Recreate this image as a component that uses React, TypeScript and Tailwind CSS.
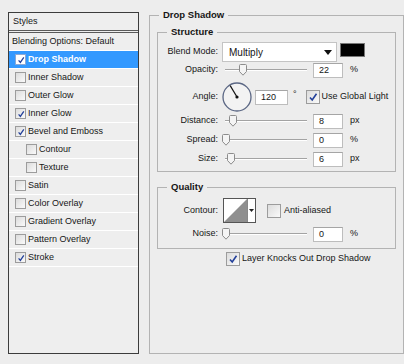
import type { ReactNode } from 'react';

type StyleItem = { name: string; checked?: boolean; selected?: boolean; indent?: boolean };

const styleItems: StyleItem[] = [
  { name: 'Drop Shadow', checked: true, selected: true },
  { name: 'Inner Shadow' },
  { name: 'Outer Glow' },
  { name: 'Inner Glow', checked: true },
  { name: 'Bevel and Emboss', checked: true },
  { name: 'Contour', indent: true },
  { name: 'Texture', indent: true },
  { name: 'Satin' },
  { name: 'Color Overlay' },
  { name: 'Gradient Overlay' },
  { name: 'Pattern Overlay' },
  { name: 'Stroke', checked: true },
];

function Check({ checked, big, white }: { checked?: boolean; big?: boolean; white?: boolean }) {
  return (
    <div
      className={
        (big ? 'w-[14px] h-[14px] ' : 'w-[11px] h-[11px] ') +
        (white
          ? 'bg-white border-[#8aa9d6] '
          : 'bg-gradient-to-br from-[#dcdcdc] to-[#fafafa] border-[#9c9c9c] ') +
        'shrink-0 border flex items-center justify-center'
      }
    >
      {checked && (
        <svg width={big ? 10 : 8} height={big ? 10 : 8} viewBox="0 0 10 10">
          <path d="M2 5.5 L4.2 8 L8.5 1.8" fill="none" stroke="#23409a" strokeWidth="1.6" />
        </svg>
      )}
    </div>
  );
}

function Slider({ thumb }: { thumb: number }) {
  return (
    <div className="relative w-[85px] h-[14px] shrink-0">
      <div className="absolute left-[3px] right-0 top-[6px] h-px bg-[#a3a3a3]" />
      <div className="absolute left-[3px] right-0 top-[7px] h-px bg-white" />
      <svg className="absolute top-[1px]" style={{ left: thumb }} width="8" height="12" viewBox="0 0 8 12">
        <path d="M1.5 0.5 H6.5 Q7.5 0.5 7.5 1.5 V7.5 L4 11.2 L0.5 7.5 V1.5 Q0.5 0.5 1.5 0.5 Z" fill="#f4f4f4" stroke="#8c8c8c" />
      </svg>
    </div>
  );
}

function NumBox({ value, wide }: { value: string; wide?: boolean }) {
  return (
    <div
      className={
        (wide ? 'w-[33px] ' : 'w-[30px] ') +
        'h-[15px] shrink-0 bg-white border border-[#bdbdbd] border-t-[#a5a5a5] pl-[5px] leading-[13px]'
      }
    >
      {value}
    </div>
  );
}

function Label({ children }: { children: ReactNode }) {
  return <div className="w-[60px] shrink-0 text-right">{children}</div>;
}

function SliderRow({ label, thumb, value, unit, className }: { label: string; thumb: number; value: string; unit: string; className: string }) {
  return (
    <div className={'flex items-center gap-[4px] h-[14px] ' + className}>
      <Label>{label}</Label>
      <Slider thumb={thumb} />
      <div className="ml-[2px]">
        <NumBox value={value} />
      </div>
      <div className="ml-[3px]">{unit}</div>
    </div>
  );
}

function Group({ title, children, className }: { title: string; children: ReactNode; className?: string }) {
  return (
    <fieldset className={'border border-[#b3b3b3] p-0 m-0 min-w-0 ' + (className ?? '')}>
      <legend className="ml-[9px] px-[4px] font-bold text-[9.5px] leading-[14px] h-[14px]">{title}</legend>
      {children}
    </fieldset>
  );
}

export default function App() {
  return (
    <div className="w-[404px] h-[364px] bg-[#ededed] text-[#161616] text-[9px] font-['Liberation_Sans',Arial,sans-serif] flex items-start pt-[8px] overflow-hidden">
      {/* Styles list */}
      <div className="ml-[8px] mt-[4px] w-[131px] h-[342px] border border-[#3c3c3c] bg-[#eeeeee] flex flex-col">
        <div className="h-[20px] pl-[4px] flex items-center border-b-[3px] border-double border-[#5a5a5a]">Styles</div>
        <div className="h-[18px] pl-[3px] flex items-center border-b border-white">Blending Options: Default</div>
        {styleItems.map((s) => (
          <div
            key={s.name}
            className={
              'h-[18px] flex items-center gap-[2px] border-b border-white ' +
              (s.indent ? 'pl-[17px] ' : 'pl-[6px] ') +
              (s.selected ? 'bg-[#3399ff] text-white font-bold' : '')
            }
          >
            <Check checked={s.checked} white={s.selected} />
            <span>{s.name}</span>
          </div>
        ))}
      </div>

      {/* Drop Shadow settings */}
      <Group title="Drop Shadow" className="ml-[10px] w-[255px] h-[346px]">
        <div className="pl-[7px] pt-[3px]">
          <Group title="Structure" className="w-[239px]">
            <div className="pt-[3px] pb-[5px]">
              <div className="flex items-center gap-[4px] h-[20px]">
                <Label>Blend Mode:</Label>
                <div className="w-[115px] h-[20px] bg-white border border-[#c4c4c4] flex items-center justify-between pl-[6px] pr-[4px] text-[10px]">
                  <span>Multiply</span>
                  <svg width="8" height="5" viewBox="0 0 8 5">
                    <path d="M0 0 H8 L4 5 Z" fill="#111" />
                  </svg>
                </div>
                <div className="ml-[-1px] self-start mt-[1px] w-[25px] h-[14px] bg-black border border-[#777]" />
              </div>
              <SliderRow label="Opacity:" thumb={17} value="22" unit="%" className="mt-[1px]" />
              <div className="flex items-center gap-[4px] h-[30px] mt-[5px]">
                <Label>Angle:</Label>
                <svg width="30" height="30" viewBox="0 0 30 30" className="shrink-0">
                  <circle cx="15" cy="15" r="14" fill="#f3f3f3" stroke="#5b6784" strokeWidth="1.3" />
                  <line x1="15" y1="15" x2="8.2" y2="3.6" stroke="#111" strokeWidth="1.2" />
                  <circle cx="15" cy="15" r="1.6" fill="#111" />
                </svg>
                <div className="ml-[-1px]">
                  <NumBox value="120" wide />
                </div>
                <div className="ml-[1px] mt-[-4px]">°</div>
                <div className="ml-[5px] flex items-center gap-[2px]">
                  <Check checked big />
                  <span>Use Global Light</span>
                </div>
              </div>
              <SliderRow label="Distance:" thumb={7} value="8" unit="px" className="mt-[2px]" />
              <SliderRow label="Spread:" thumb={0} value="0" unit="%" className="mt-[5px]" />
              <SliderRow label="Size:" thumb={5} value="6" unit="px" className="mt-[5px]" />
            </div>
          </Group>

          <Group title="Quality" className="w-[239px] mt-[8px]">
            <div className="pt-[4px] pb-[7px]">
              <div className="flex items-center gap-[4px] h-[25px]">
                <Label>Contour:</Label>
                <div className="ml-[1px] w-[33px] h-[25px] border border-[#555] bg-white flex">
                  <svg width="23" height="23" viewBox="0 0 23 23" className="shrink-0">
                    <path d="M0 23 L23 0 V23 Z" fill="#8f8f8f" />
                  </svg>
                  <div className="flex-1 border-l border-[#888] flex items-center justify-center">
                    <svg width="5" height="3" viewBox="0 0 5 3">
                      <path d="M0 0 H5 L2.5 3 Z" fill="#222" />
                    </svg>
                  </div>
                </div>
                <div className="ml-[7px] flex items-center gap-[3px]">
                  <Check big />
                  <span>Anti-aliased</span>
                </div>
              </div>
              <SliderRow label="Noise:" thumb={0} value="0" unit="%" className="mt-[4px]" />
            </div>
          </Group>

          <div className="mt-[3px] ml-[69px] flex items-center gap-[2px] h-[14px]">
            <Check checked big />
            <span>Layer Knocks Out Drop Shadow</span>
          </div>
        </div>
      </Group>
    </div>
  );
}
